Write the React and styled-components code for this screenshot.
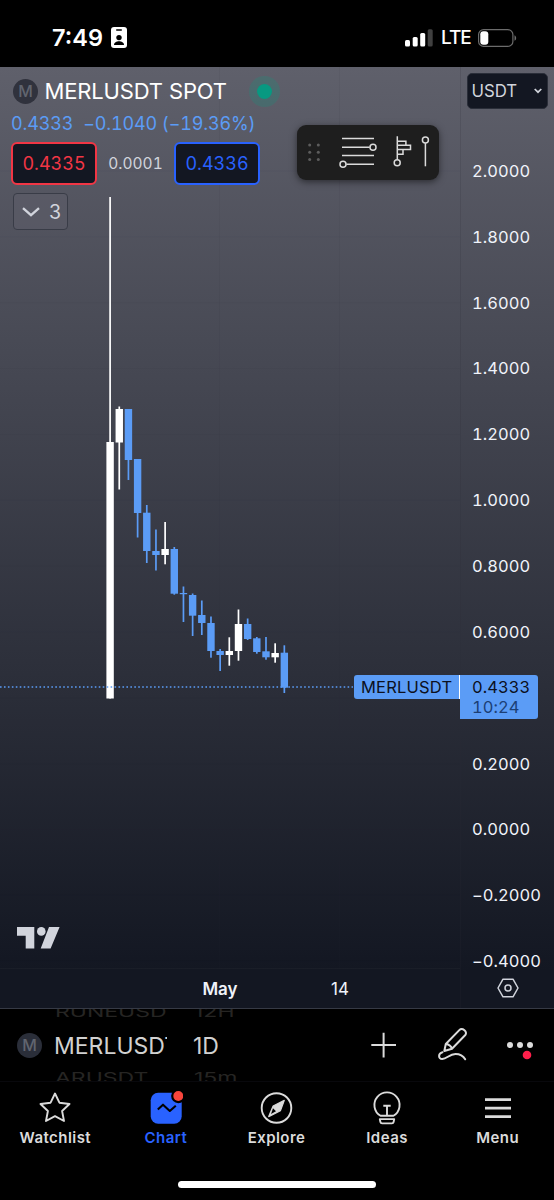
import React from 'react';
import styled, { createGlobalStyle } from 'styled-components';

const candles = [
    { high: 197, top: 442, bottom: 698.5, low: 698.5, up: true },
    { high: 406.5, top: 409, bottom: 442.5, low: 489.5, up: true },
    { high: 409, top: 409, bottom: 460, low: 480 },
    { high: 459, top: 459, bottom: 513, low: 537.5 },
    { high: 505, top: 512.7, bottom: 551, low: 563 },
    { high: 529.5, top: 551, bottom: 555, low: 570.5 },
    { high: 522, top: 549, bottom: 555, low: 564.3, up: true },
    { high: 547, top: 549, bottom: 593.7, low: 594.7 },
    { high: 586.5, top: 593, bottom: 594.2, low: 622 },
    { high: 593.5, top: 595, bottom: 615.7, low: 636 },
    { high: 600.5, top: 615, bottom: 623, low: 635 },
    { high: 616.5, top: 623, bottom: 651, low: 657.7 },
    { high: 649, top: 651, bottom: 655, low: 671 },
    { high: 637.3, top: 651, bottom: 655, low: 665.7, up: true },
    { high: 609.5, top: 624, bottom: 651, low: 660.7, up: true },
    { high: 618.5, top: 624, bottom: 639, low: 640 },
    { high: 637, top: 638.3, bottom: 652, low: 653.7 },
    { high: 637, top: 651.3, bottom: 657.3, low: 659.7 },
    { high: 643.3, top: 653, bottom: 657.3, low: 662.7, up: true },
    { high: 645.3, top: 652.7, bottom: 687.7, low: 693 },
];

const prices = [
    '2.0000', '1.8000', '1.6000', '1.4000', '1.2000', '1.0000', '0.8000',
    '0.6000', '0.4000', '0.2000', '0.0000', '−0.2000', '−0.4000',
];

const CHART_TOP = 67;

const Plot = () => (
    <PlotSvg viewBox="0 67 460 941">
        <g stroke="#2a2e39" strokeOpacity="0.07">
            <path d="M219.5 67V968M339.5 67V968" />
            {prices.map((price, i) => (
                <path key={price} d={`M0 ${171 + i * 65.85}H460`} strokeOpacity="0.03" />
            ))}
        </g>
        {candles.map(({ high, top, bottom, low, up }, i) => {
            const x = 110.1 + i * 9.17;
            return (
                <g key={i} fill={up ? '#fff' : '#5b9cf6'}>
                    <rect x={x - 0.85} y={high} width="1.7" height={low - high} />
                    <rect x={x - 3.7} y={top} width="7.4" height={bottom - top} />
                </g>
            );
        })}
        <path d="M0 687H353" stroke="#5b9cf6" strokeWidth="1.4" strokeDasharray="1.6 2.35" />
    </PlotSvg>
);

const StatusBar = () => (
    <Status>
        <Clock>7:49</Clock>
        <svg width="16" height="21" viewBox="0 0 16 21">
            <rect width="16" height="21" rx="3" fill="#fff" />
            <rect x="5" y="2.2" width="6" height="1.5" rx="0.7" fill="#000" />
            <circle cx="8" cy="10.6" r="2.7" fill="#000" />
            <path d="M3 18c0-5 10-5 10 0z" fill="#000" />
        </svg>
        <Signal width="28" height="18" viewBox="0 0 28 18" fill="#fff">
            <rect y="11" width="5" height="6.5" rx="1.5" />
            <rect x="7.7" y="8" width="5" height="9.5" rx="1.5" />
            <rect x="15.2" y="4" width="5" height="13.5" rx="1.5" />
            <rect x="22.7" y="0.3" width="5" height="17.2" rx="1.5" opacity="0.25" />
        </Signal>
        <Network>LTE</Network>
        <svg width="39" height="18" viewBox="0 0 39 18">
            <rect x="0.6" y="0.6" width="34.3" height="16.8" rx="5" fill="none" stroke="#6c6c6c" strokeWidth="1.2" />
            <rect x="2.3" y="2.3" width="8" height="13.4" rx="3" fill="#fff" />
            <path d="M36.5 6.2c2.2 1 2.2 4.6 0 5.6z" fill="#6c6c6c" />
        </svg>
    </Status>
);

const Legend = () => (
    <LegendBox>
        <TitleRow>
            <Coin>M</Coin>
            <Title>MERLUSDT SPOT</Title>
            <MarketDot />
        </TitleRow>
        <Change><span>0.4333</span><span>−0.1040 (−19.36%)</span></Change>
        <Quotes>
            <Quote color="#f23645">0.4335</Quote>
            <Spread>0.0001</Spread>
            <Quote color="#2962ff">0.4336</Quote>
        </Quotes>
        <Indicators>
            <svg width="18" height="10" viewBox="0 0 18 10" fill="none" stroke="#d1d4dc" strokeWidth="2.3">
                <path d="M1 1.2l8 7 8-7" />
            </svg>
            3
        </Indicators>
    </LegendBox>
);

const DrawingTools = () => (
    <Toolbar>
        <svg width="142" height="55" viewBox="0 0 142 55" fill="none" stroke="#dbdbdb" strokeWidth="1.5">
            <g fill="#5d5d5d" stroke="none">
                {[20, 27.2, 34.4].map((y) => (
                    <React.Fragment key={y}>
                        <circle cx="12.7" cy={y} r="1.5" />
                        <circle cx="21.3" cy={y} r="1.5" />
                    </React.Fragment>
                ))}
            </g>
            <path d="M45 13.6h32M45 22.2h27.7M45 30.6h32M49.3 39.3H77" />
            <circle cx="76" cy="22.2" r="3" />
            <circle cx="46" cy="39.3" r="3" />
            <path d="M100.3 11.3v23.3M100.3 16.3h8.6v3.9M100.3 20.2h13.2v4.4h-13.2M106 24.6v4.6h-5.7" />
            <circle cx="100.2" cy="37.8" r="3" />
            <circle cx="128.4" cy="15.1" r="3" />
            <path d="M128.4 18.1v23.2" />
        </svg>
    </Toolbar>
);

const Logo = () => (
    <LogoSvg width="43" height="22" viewBox="0 0 43 22" fill="#d1d4dc">
        <path d="M0 0h17.3v21.5H8.7V8.7H0zM32 0h10.6l-9 21.5H23.7z" />
        <circle cx="24.3" cy="4.4" r="4.3" />
    </LogoSvg>
);

const tabs = [
    {
        label: 'Watchlist',
        icon: <path d="M17 3.5l4.4 9.2 10.1 1.3-7.4 7 1.9 10-9-4.9L8 31l1.9-10-7.4-7 10.1-1.3z" />,
    },
    {
        label: 'Chart',
        active: true,
        icon: (
            <>
                <rect x="1.7" y="2.7" width="31" height="31" rx="7.5" fill="#2962ff" stroke="none" />
                <path d="M8.8 19.5l5.2-4.8 6.8 6.3 6-5.3" stroke="#000" strokeWidth="2.1" />
                <circle cx="29.3" cy="6" r="7.2" fill="#000" stroke="none" />
                <circle cx="29.3" cy="6" r="5" fill="#f7453c" stroke="none" />
            </>
        ),
    },
    {
        label: 'Explore',
        icon: (
            <>
                <circle cx="17.5" cy="18" r="14.8" />
                <path d="M25.3 10.4l-3.9 10.4-11.7 5.8 4.4-10.6z" fill="#dbdbdb" strokeWidth="1.2" />
                <path d="M14 18.2l3 3-5 2.9z" fill="#000" stroke="none" />
            </>
        ),
    },
    {
        label: 'Ideas',
        icon: (
            <>
                <path d="M10.5 25.8a12.6 12.6 0 1 1 13 0z" />
                <path d="M13.3 15.7h7.4M17 15.7v9.5M9.8 29.1h14.4l-.6 2.9q-.3 1.4-1.700 1.400h-9.800q-1.400 0-1.700-1.400z" />
            </>
        ),
    },
    {
        label: 'Menu',
        icon: <path d="M4 9.7h26M4 18.2h26M4 26.7h26" strokeWidth="2.7" />,
    },
];

const App = () => (
    <>
        <GlobalStyle />
        <Screen>
            <StatusBar />
            <Chart>
                <Plot />
                <Pane>
                    <Legend />
                    <Logo />
                    <TimeScale>
                        <TimeLabel center={220} bold>May</TimeLabel>
                        <TimeLabel center={340}>14</TimeLabel>
                    </TimeScale>
                </Pane>
                <PriceScale>
                    <Currency>
                        USDT
                        <svg width="8" height="6" viewBox="0 0 8 6" fill="none" stroke="#d1d4dc" strokeWidth="1.7">
                            <path d="M0.7 1L4 4.2 7.3 1" />
                        </svg>
                    </Currency>
                    {prices.map((price) => (
                        <PriceRow key={price}>
                            {price === '0.4000' ? (
                                <PriceTag>
                                    0.4333
                                    <Countdown>10:24</Countdown>
                                    <SymbolTag>MERLUSDT</SymbolTag>
                                </PriceTag>
                            ) : price}
                        </PriceRow>
                    ))}
                    <ScaleSettings>
                        <svg width="22" height="20" viewBox="0 0 22 20" fill="none" stroke="#d1d4dc" strokeWidth="1.5">
                            <path d="M6 1.2h10L21 10l-5 8.8H6L1 10z" strokeLinejoin="round" />
                            <circle cx="11" cy="10" r="3" />
                        </svg>
                    </ScaleSettings>
                </PriceScale>
                <DrawingTools />
            </Chart>
            <Picker>
                <Coin dim>M</Coin>
                <Wheel width={113}>
                    <Ghost>RUNEUSD</Ghost>
                    <Current>MERLUSDT</Current>
                    <Ghost>ARUSDT</Ghost>
                </Wheel>
                <Wheel width={60}>
                    <Ghost>12H</Ghost>
                    <Current>1D</Current>
                    <Ghost>15m</Ghost>
                </Wheel>
                <Actions width="190" height="72" viewBox="360 1009 190 72" fill="none" stroke="#dbdbdb" strokeWidth="2">
                    <path d="M371.300 1045h24.700M383.600 1032.700v24.700" />
                    <path d="M444.300 1051l1.500-7 13.500-13.900c3-3 8.700 1.700 6 4.900l-13.300 13.700zM445.800 1044q4.800.6 6.200 4.700" strokeLinejoin="round" />
                    <path d="M442.500 1052.300c-4.500 1-4.500 6.700-.3 6.700 4.800 0 7-5 13.300-5 5 0 7.500 1.500 9.700 5.300" strokeLinecap="round" />
                    <g fill="#dbdbdb" stroke="none">
                        <circle cx="510" cy="1045" r="3" />
                        <circle cx="520" cy="1045" r="3" />
                        <circle cx="530" cy="1045" r="3" />
                        <circle cx="527" cy="1055" r="4.3" fill="#ff1f4b" />
                    </g>
                </Actions>
            </Picker>
            <TabBar>
                {tabs.map(({ label, icon, active }) => (
                    <Tab key={label} active={active}>
                        <svg width="34" height="36" viewBox="0 0 34 36" fill="none" stroke="#dbdbdb" strokeWidth="1.9" strokeLinejoin="round">
                            {icon}
                        </svg>
                        {label}
                    </Tab>
                ))}
            </TabBar>
            <HomeIndicator />
        </Screen>
    </>
);

export default App;

const GlobalStyle = createGlobalStyle`
    * {
        box-sizing: border-box;
    }

    body {
        margin: 0;
        background: #000;
        font-family: Inter, "Liberation Sans", sans-serif;
    }

    svg {
        display: block;
        flex-shrink: 0;
    }
`;

const Screen = styled.div`
    width: 554px;
    height: 1200px;
    display: flex;
    flex-direction: column;
    background: #000;
    overflow: hidden;
    white-space: nowrap;
`;

const Status = styled.header`
    height: ${CHART_TOP}px;
    display: flex;
    align-items: center;
    padding: 8px 37px 0 52px;
    color: #fff;
    flex-shrink: 0;
`;

const Clock = styled.span`
    width: 59px;
    font-size: 23.5px;
    font-weight: 600;
`;

const Signal = styled.svg`
    margin-left: auto;
    margin-right: 8px;
`;

const Network = styled.span`
    width: 37px;
    font-size: 19px;
    font-weight: 500;
    letter-spacing: -1px;
`;

const Chart = styled.main`
    position: relative;
    height: 942px;
    display: flex;
    flex-shrink: 0;
    background: linear-gradient(#5f606b, #131722 96%);
    border-bottom: 1px solid #363a45;
`;

const PlotSvg = styled.svg`
    position: absolute;
    left: 0;
    top: 0;
    width: 460px;
    height: 941px;
`;

const Pane = styled.section`
    position: relative;
    width: 460px;
    display: flex;
    flex-direction: column;
`;

const LegendBox = styled.div`
    padding: 9px 0 0 11px;
    color: #fff;
`;

const TitleRow = styled.div`
    height: 30px;
    display: flex;
    align-items: center;
`;

const Coin = styled.span`
    width: 25px;
    height: 25px;
    margin-left: ${({ dim }) => (dim ? "0" : "2px")};
    display: flex;
    align-items: center;
    justify-content: center;
    border-radius: 50%;
    background: ${({ dim }) => (dim ? "#2a2e39" : "#30323d")};
    color: #61656f;
    font-size: 16px;
    font-weight: 500;
    flex-shrink: 0;
`;

const Title = styled.h1`
    width: 204px;
    margin: 0 0 0 6.5px;
    font-size: 22px;
    font-weight: 400;
    letter-spacing: -0.15px;
`;

const MarketDot = styled.span`
    width: 31px;
    height: 31px;
    border: 8px solid rgba(8, 153, 129, 0.22);
    border-radius: 50%;
    background: #089981;
    background-clip: padding-box;
`;

const Change = styled.div`
    height: 35px;
    margin-bottom: 1px;
    display: flex;
    align-items: center;
    gap: 10px;
    color: #5b9cf6;
    font-size: 18px;
    font-variant-numeric: tabular-nums;
    letter-spacing: -0.15px;
`;

const Quotes = styled.div`
    height: 43px;
    display: flex;
    align-items: center;
`;

const Quote = styled.button`
    width: 86px;
    height: 43px;
    padding: 0;
    border: 2px solid ${({ color }) => color};
    border-radius: 6px;
    background: #131722;
    color: ${({ color }) => color};
    font: 400 18px Inter, sans-serif;
    font-variant-numeric: tabular-nums;
`;

const Spread = styled.span`
    width: 77px;
    color: #d1d4dc;
    font-size: 15.5px;
    font-variant-numeric: tabular-nums;
    text-align: center;
`;

const Indicators = styled.button`
    width: 55px;
    height: 37px;
    margin: 8px 0 0 2px;
    padding: 0 6px 0 8px;
    display: flex;
    align-items: center;
    justify-content: space-between;
    border: 1px solid #393c47;
    border-radius: 4px;
    background: rgba(93, 94, 106, 0.5);
    color: #d1d4dc;
    font: 400 19.5px Inter, sans-serif;
`;

const Toolbar = styled.div`
    position: absolute;
    left: 297px;
    top: 58px;
    width: 142px;
    height: 55px;
    border-radius: 9px;
    background: #1e1e1e;
    box-shadow: 0 2px 7px rgba(0, 0, 0, 0.5);
`;

const LogoSvg = styled.svg`
    margin: auto 0 19px 17px;
`;

const TimeScale = styled.div`
    position: relative;
    height: 40px;
    border-top: 1px solid rgba(42, 46, 57, 0.25);
    color: #f0f3fa;
`;

const TimeLabel = styled.span`
    position: absolute;
    left: ${({ center }) => center}px;
    top: 50%;
    transform: translate(-50%, -50%);
    font-size: 17px;
    font-weight: ${({ bold }) => (bold ? 600 : 400)};
`;

const PriceScale = styled.aside`
    position: relative;
    width: 94px;
    display: flex;
    flex-direction: column;
    border-left: 1px solid rgba(42, 46, 57, 0.18);
    color: #f0f3fa;
    font-size: 16.5px;
    font-variant-numeric: tabular-nums;
    line-height: 24px;
    letter-spacing: 0.05px;
`;

const Currency = styled.button`
    width: 81px;
    height: 36px;
    margin: 6px 0 29px 5.5px;
    padding: 0 5px 1px 4px;
    display: flex;
    align-items: center;
    justify-content: space-between;
    border: 1px solid #2a2e39;
    border-radius: 5px;
    background: #131722;
    color: #d1d4dc;
    font: 400 16.8px Inter, sans-serif;
    flex-shrink: 0;
`;

const PriceRow = styled.div`
    height: 65.85px;
    padding-left: 11px;
    display: flex;
    align-items: center;
    flex-shrink: 0;

    &:nth-last-child(2) {
        height: 45px;
        align-items: flex-end;
    }
`;

const PriceTag = styled.div`
    position: relative;
    width: 78px;
    height: 44px;
    margin: -2px 0 0 -12px;
    padding: 2px 0 0 12px;
    border-radius: 0 3px 3px 0;
    background: #5b9cf6;
    color: #0c1020;
    line-height: 20px;
`;

const Countdown = styled.div`
    color: #1c3f75;
`;

const SymbolTag = styled.div`
    position: absolute;
    right: 78px;
    top: 0;
    width: 106px;
    height: 24px;
    padding-left: 7px;
    border-right: 1.5px solid #fff;
    border-radius: 3px 0 0 3px;
    background: #5b9cf6;
    line-height: 24px;
    letter-spacing: 0.2px;
`;

const ScaleSettings = styled.div`
    flex: 1;
    padding: 5px 0 0 36px;
`;

const Picker = styled.div`
    height: 72px;
    display: flex;
    align-items: center;
    padding-left: 17px;
    flex-shrink: 0;
    overflow: hidden;
`;

const Wheel = styled.div`
    width: ${({ width }) => width}px;
    height: 72px;
    margin-left: ${({ width }) => (width > 100 ? 12 : 26)}px;
    display: flex;
    flex-direction: column;
    align-items: flex-start;
    justify-content: center;
    overflow: hidden;
`;

const Current = styled.div`
    height: 44px;
    color: #d1d1d1;
    font-size: 23px;
    line-height: 46px;
    flex-shrink: 0;
`;

const Ghost = styled.div`
    height: 22px;
    padding-left: 1px;
    color: #262523;
    font-size: 23px;
    line-height: 22px;
    transform: scaleY(0.65);
    flex-shrink: 0;
`;

const Actions = styled.svg`
    margin-left: auto;
    margin-right: 4px;
`;

const TabBar = styled.nav`
    height: 74px;
    display: grid;
    grid-template-columns: repeat(5, 1fr);
    padding: 8px 1px 0 0;
    border-top: 1px solid #08080c;
    flex-shrink: 0;
`;

const Tab = styled.a`
    display: flex;
    flex-direction: column;
    align-items: center;
    gap: 2px;
    color: ${({ active }) => (active ? "#2962ff" : "#dbdbdb")};
    font-size: 15px;
    font-weight: 600;
    line-height: 20px;
    letter-spacing: 0.45px;
`;

const HomeIndicator = styled.div`
    width: 198px;
    height: 7px;
    margin: 26px auto 0;
    border-radius: 4px;
    background: #fff;
`;
